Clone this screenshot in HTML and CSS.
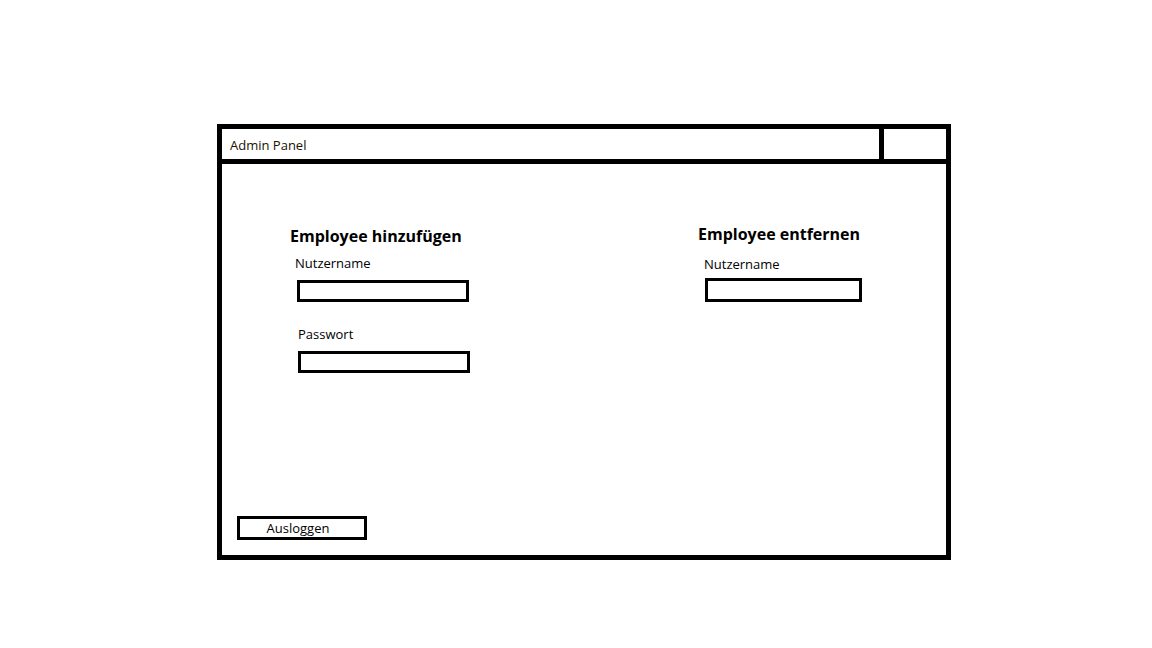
FILE: index.html
```html
<!DOCTYPE html>
<html lang="de">
<head>
    <meta charset="UTF-8">
    <meta name="viewport" content="width=device-width, initial-scale=1.0">
    <title>Admin Panel</title>
    <link rel="stylesheet" href="styles.css">
</head>
<body>
    <div class="frame">
        <div class="titlebar">
            <div class="title">Admin Panel</div>
            <div class="titlebtn"></div>
        </div>
        <div class="content">
            <div class="sections">
                <div class="section add">
                    <h2>Employee hinzufügen</h2>
                    <label for="addUser" class="lbl-user">Nutzername</label>
                    <input type="text" id="addUser" class="field-user">
                    <label for="addPass" class="lbl-pass">Passwort</label>
                    <input type="password" id="addPass" class="field-pass">
                </div>
                <div class="section remove">
                    <h2>Employee entfernen</h2>
                    <label for="remUser" class="lbl-user">Nutzername</label>
                    <input type="text" id="remUser" class="field-user">
                </div>
            </div>
            <button type="button" class="logout">Ausloggen</button>
        </div>
    </div>
</body>
</html>
```

FILE: styles.css
```css
body {
    margin: 0;
    padding: 124px 0 0 217px;
    background: #fff;
    color: #000;
    font-family: 'Open Sans', 'Lato', sans-serif;
}

.frame {
    width: 734px;
    height: 436px;
    box-sizing: border-box;
    border: 5px solid #000;
    display: flex;
    flex-direction: column;
}

.titlebar {
    display: flex;
    height: 30px;
    border-bottom: 5px solid #000;
}

.title {
    flex: 1;
    padding-left: 8px;
    font-size: 13px;
    line-height: 32px;
    color: #1a1200;
}

.titlebtn {
    width: 62px;
    border-left: 5px solid #000;
}

.content {
    flex: 1;
    display: flex;
    flex-direction: column;
    padding: 62px 0 15px 15px;
}

.sections {
    display: flex;
    padding-left: 53px;
}

.section {
    display: flex;
    flex-direction: column;
    align-items: flex-start;
}

.section.add {
    width: 408px;
}

h2 {
    margin: 0;
    font-size: 16px;
    line-height: 20px;
    font-weight: bold;
}

label {
    font-size: 13px;
    line-height: 18px;
    margin-top: 8px;
    margin-left: 5px;
}

input {
    box-sizing: border-box;
    height: 22px;
    margin-top: 8px;
    border: 3px solid #000;
    background: #fff;
    padding: 0;
    outline: none;
}

.add .field-user {
    width: 172px;
    margin-left: 7px;
}

.add .lbl-pass {
    margin-top: 23px;
    margin-left: 8px;
}

.add .field-pass {
    width: 172px;
    margin-left: 8px;
}

.remove h2 {
    margin-top: -2px;
}

.remove .lbl-user {
    margin-top: 11px;
    margin-left: 6px;
}

.remove .field-user {
    width: 157px;
    height: 24px;
    margin-top: 5px;
    margin-left: 7px;
}

.logout {
    margin-top: auto;
    width: 130px;
    height: 24px;
    border: 3px solid #000;
    background: #fff;
    font-family: 'Open Sans', 'Lato', sans-serif;
    font-size: 13px;
    padding: 0 8px 0 0;
    color: #000;
}
```
